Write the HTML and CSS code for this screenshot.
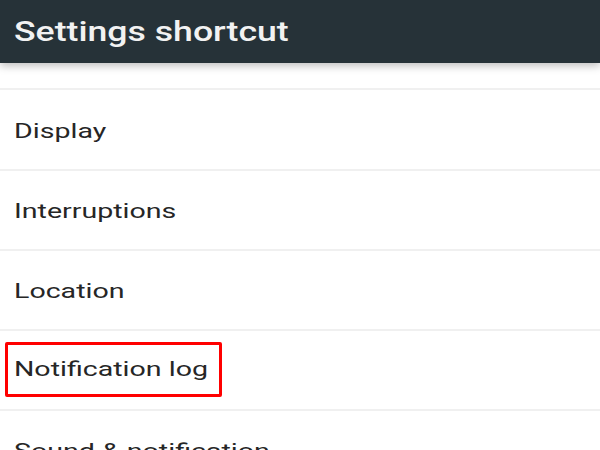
FILE: index.html
```html
<!DOCTYPE html>
<html lang="en">

<head>
    <meta charset="UTF-8">
    <meta name="viewport" content="width=device-width, initial-scale=1.0">
    <title>Settings shortcut</title>
    <link rel="stylesheet" href="styles.css">
</head>

<body>
    <div class="toolbar">
        <h1>Settings shortcut</h1>
    </div>
    <ul class="list">
        <li class="item"><span class="label">Display</span></li>
        <li class="item"><span class="label">Interruptions</span></li>
        <li class="item"><span class="label">Location</span></li>
        <li class="item">
            <div class="marked"><span class="label">Notification log</span></div>
        </li>
        <li class="item"><span class="label">Sound &amp; notification</span></li>
    </ul>
</body>

</html>
```

FILE: styles.css
```css
* {
    margin: 0;
    padding: 0;
    box-sizing: border-box;
}

body {
    background-color: #fff;
    font-family: Roboto, "Liberation Sans", sans-serif;
    overflow: hidden;
}

.toolbar {
    position: relative;
    height: 63px;
    background-color: #263238;
    display: flex;
    align-items: center;
    padding-left: 14px;
    box-shadow: 0 3px 8px rgba(0, 0, 0, 0.25);
}

.toolbar h1 {
    color: #f2f2f2;
    font-size: 27px;
    font-weight: 500;
    transform: scaleX(1.32);
    transform-origin: left center;
}

.list {
    list-style: none;
    margin-top: 25px;
    border-top: 2px solid #f0f0f0;
}

.item {
    height: 80px;
    border-bottom: 2px solid #f0f0f0;
    display: flex;
    align-items: center;
    padding-left: 14px;
    padding-top: 2px;
}

.item:first-child {
    height: 81px;
}

.label {
    display: inline-block;
    color: #262626;
    font-size: 21px;
    white-space: nowrap;
    transform: scaleX(1.36);
    transform-origin: left center;
}

.marked {
    display: flex;
    align-items: center;
    width: 217px;
    height: 55px;
    margin-left: -9px;
    margin-top: -4px;
    padding-left: 6px;
    border: 3px solid #f00;
    border-radius: 2px;
}
```
